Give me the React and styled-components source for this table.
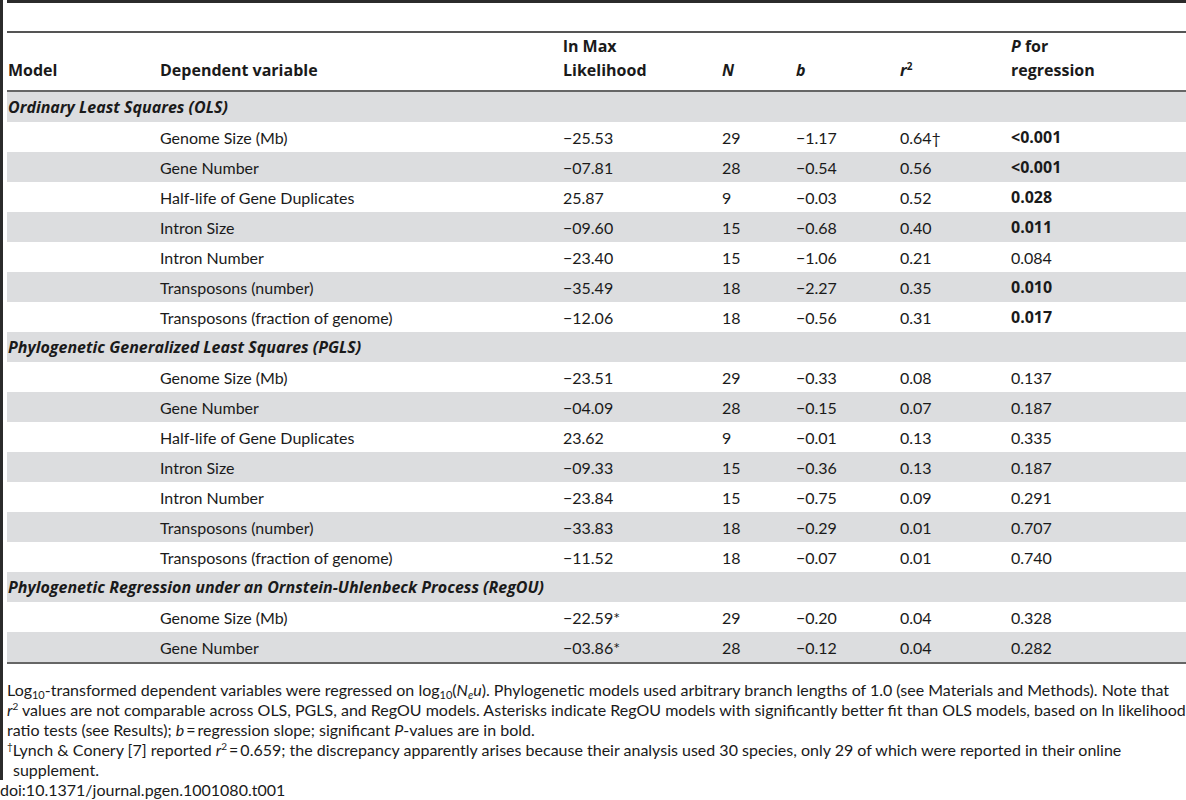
import React from 'react';
import styled, { createGlobalStyle } from 'styled-components';

const GlobalStyle = createGlobalStyle`
    html, body {
        margin: 0;
        padding: 0;
        background: #ffffff;
    }
    body {
        font-family: Lato, "Open Sans", sans-serif;
        color: #1a1a1a;
        font-size: 16px;
    }
`;

const COLUMNS = '152px 403px 159px 74px 104px 111px 1fr';
const BOLD_FONT = '"Open Sans", Lato, sans-serif';

const Page = styled.div`
    width: 1186px;
    display: flex;
    flex-direction: column;
`;

const Framed = styled.div`
    border-left: 3px solid #2b2b2b;
    padding-left: 4px;
    display: flex;
    flex-direction: column;
`;

const TopRule = styled.div`
    height: 3px;
    background: #2b2b2b;
    margin-bottom: 28px;
`;

const Table = styled.div`
    border-top: 2px solid #555;
    border-bottom: 2px solid #666;
    display: flex;
    flex-direction: column;
`;

const HeadRow = styled.div`
    display: grid;
    grid-template-columns: ${COLUMNS};
    align-items: end;
    height: 59px;
    padding-bottom: 8px;
    box-sizing: border-box;
    border-bottom: 2px solid #666;
`;

const HeadCell = styled.div`
    font-family: ${BOLD_FONT};
    font-weight: 700;
    line-height: 24px;
    padding-left: 1px;
`;

const Row = styled.div`
    display: grid;
    grid-template-columns: ${COLUMNS};
    align-items: center;
    height: 30px;
    background: ${(props) => (props.shaded ? '#dcdddf' : '#ffffff')};
`;

const Cell = styled.div`
    padding-left: 1px;
    white-space: nowrap;
`;

const BoldValue = styled.span`
    font-family: ${BOLD_FONT};
    font-weight: 700;
`;

const SectionCell = styled.div`
    grid-column: 1 / -1;
    padding-left: 1px;
    font-family: ${BOLD_FONT};
    font-weight: 700;
    font-style: italic;
`;

const Notes = styled.div`
    padding-top: 16px;
    line-height: 20px;
`;

const Note = styled.p`
    margin: 0;
    white-space: nowrap;
    padding-left: ${(props) => (props.hanging ? '6px' : '0')};
    text-indent: ${(props) => (props.hanging ? '-6px' : '0')};
`;

const Doi = styled.div`
    line-height: 20px;
    padding-bottom: 4px;
`;

const Sup = styled.sup`
    font-size: 10px;
    line-height: 0;
    vertical-align: 6px;
`;

const Sub = styled.sub`
    font-size: 11px;
    line-height: 0;
    vertical-align: -3px;
`;

const M = '\u2212';

const sections = [
    {
        title: 'Ordinary Least Squares (OLS)',
        rows: [
            ['Genome Size (Mb)', `${M}25.53`, '29', `${M}1.17`, '0.64\u2020', '<0.001', true],
            ['Gene Number', `${M}07.81`, '28', `${M}0.54`, '0.56', '<0.001', true],
            ['Half-life of Gene Duplicates', '25.87', '9', `${M}0.03`, '0.52', '0.028', true],
            ['Intron Size', `${M}09.60`, '15', `${M}0.68`, '0.40', '0.011', true],
            ['Intron Number', `${M}23.40`, '15', `${M}1.06`, '0.21', '0.084', false],
            ['Transposons (number)', `${M}35.49`, '18', `${M}2.27`, '0.35', '0.010', true],
            ['Transposons (fraction of genome)', `${M}12.06`, '18', `${M}0.56`, '0.31', '0.017', true],
        ],
    },
    {
        title: 'Phylogenetic Generalized Least Squares (PGLS)',
        rows: [
            ['Genome Size (Mb)', `${M}23.51`, '29', `${M}0.33`, '0.08', '0.137', false],
            ['Gene Number', `${M}04.09`, '28', `${M}0.15`, '0.07', '0.187', false],
            ['Half-life of Gene Duplicates', '23.62', '9', `${M}0.01`, '0.13', '0.335', false],
            ['Intron Size', `${M}09.33`, '15', `${M}0.36`, '0.13', '0.187', false],
            ['Intron Number', `${M}23.84`, '15', `${M}0.75`, '0.09', '0.291', false],
            ['Transposons (number)', `${M}33.83`, '18', `${M}0.29`, '0.01', '0.707', false],
            ['Transposons (fraction of genome)', `${M}11.52`, '18', `${M}0.07`, '0.01', '0.740', false],
        ],
    },
    {
        title: 'Phylogenetic Regression under an Ornstein-Uhlenbeck Process (RegOU)',
        rows: [
            ['Genome Size (Mb)', `${M}22.59*`, '29', `${M}0.20`, '0.04', '0.328', false],
            ['Gene Number', `${M}03.86*`, '28', `${M}0.12`, '0.04', '0.282', false],
        ],
    },
];

const App = () => {
    let index = 0;
    return (
        <Page>
            <GlobalStyle />
            <Framed>
                <TopRule />
                <Table>
                    <HeadRow>
                        <HeadCell>Model</HeadCell>
                        <HeadCell>Dependent variable</HeadCell>
                        <HeadCell>ln Max<br />Likelihood</HeadCell>
                        <HeadCell><i>N</i></HeadCell>
                        <HeadCell><i>b</i></HeadCell>
                        <HeadCell><i>r</i><Sup>2</Sup></HeadCell>
                        <HeadCell><i>P</i> for<br />regression</HeadCell>
                    </HeadRow>
                    {sections.map((section) => {
                        const titleShaded = index++ % 2 === 0;
                        return (
                            <React.Fragment key={section.title}>
                                <Row shaded={titleShaded}>
                                    <SectionCell>{section.title}</SectionCell>
                                </Row>
                                {section.rows.map((r) => {
                                    const shaded = index++ % 2 === 0;
                                    return (
                                        <Row key={section.title + r[0]} shaded={shaded}>
                                            <Cell />
                                            <Cell>{r[0]}</Cell>
                                            <Cell>{r[1]}</Cell>
                                            <Cell>{r[2]}</Cell>
                                            <Cell>{r[3]}</Cell>
                                            <Cell>{r[4]}</Cell>
                                            <Cell>{r[6] ? <BoldValue>{r[5]}</BoldValue> : r[5]}</Cell>
                                        </Row>
                                    );
                                })}
                            </React.Fragment>
                        );
                    })}
                </Table>
                <Notes>
                    <Note>
                        Log<Sub>10</Sub>-transformed dependent variables were regressed on log<Sub>10</Sub>(<i>N<Sub>e</Sub>u</i>). Phylogenetic models used arbitrary branch lengths of 1.0 (see Materials and Methods). Note that<br />
                        <i>r</i><Sup>2</Sup> values are not comparable across OLS, PGLS, and RegOU models. Asterisks indicate RegOU models with significantly better fit than OLS models, based on ln likelihood<br />
                        ratio tests (see Results); <i>b</i>&thinsp;=&thinsp;regression slope; significant <i>P</i>-values are in bold.
                    </Note>
                    <Note hanging>
                        <Sup>†</Sup>Lynch &amp; Conery [7] reported <i>r</i><Sup>2</Sup>&thinsp;=&thinsp;0.659; the discrepancy apparently arises because their analysis used 30 species, only 29 of which were reported in their online<br />
                        supplement.
                    </Note>
                </Notes>
            </Framed>
            <Doi>doi:10.1371/journal.pgen.1001080.t001</Doi>
        </Page>
    );
};

export default App;
